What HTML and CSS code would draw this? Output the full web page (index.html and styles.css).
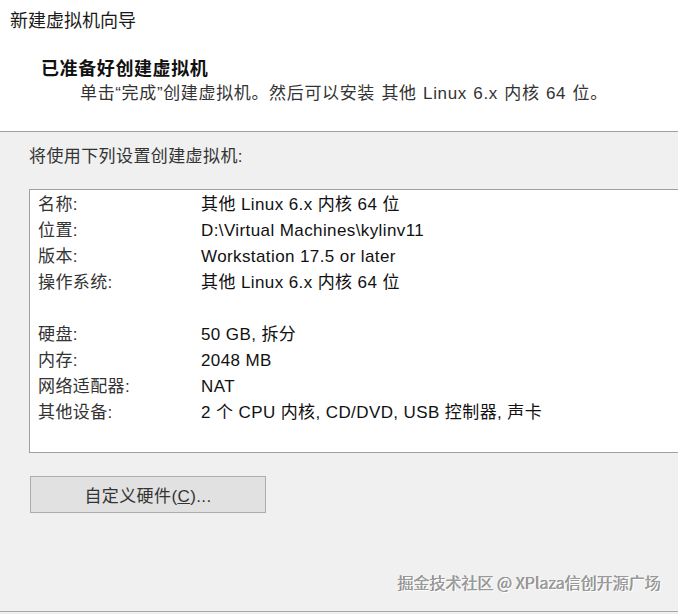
FILE: index.html
```html
<!DOCTYPE html>
<html lang="zh-CN">
<head>
<meta charset="utf-8">
<title>新建虚拟机向导</title>
<link rel="stylesheet" href="styles.css">
</head>
<body>
<div class="window">
  <header class="header">
    <div class="title">新建虚拟机向导</div>
    <div class="heading">已准备好创建虚拟机</div>
    <div class="subtitle">单击“完成”创建虚拟机。然后可以安装 其他 Linux 6.x 内核 64 位。</div>
  </header>
  <main class="content">
    <div class="intro">将使用下列设置创建虚拟机:</div>
    <div class="summary">
      <div class="row"><span class="label">名称:</span><span class="value">其他 Linux 6.x 内核 64 位</span></div>
      <div class="row"><span class="label">位置:</span><span class="value">D:\Virtual Machines\kylinv11</span></div>
      <div class="row"><span class="label">版本:</span><span class="value">Workstation 17.5 or later</span></div>
      <div class="row"><span class="label">操作系统:</span><span class="value">其他 Linux 6.x 内核 64 位</span></div>
      <div class="row spacer"></div>
      <div class="row"><span class="label">硬盘:</span><span class="value">50 GB, 拆分</span></div>
      <div class="row"><span class="label">内存:</span><span class="value">2048 MB</span></div>
      <div class="row"><span class="label">网络适配器:</span><span class="value">NAT</span></div>
      <div class="row"><span class="label">其他设备:</span><span class="value">2 个 CPU 内核, CD/DVD, USB 控制器, 声卡</span></div>
    </div>
    <button class="btn" type="button">自定义硬件(<u>C</u>)...</button>
    <div class="watermark">掘金技术社区 @ XPlaza信创开源广场</div>
  </main>
</div>
</body>
</html>
```
FILE: styles.css
```css
html, body {
  margin: 0;
  padding: 0;
}
body {
  width: 678px;
  height: 614px;
  overflow: hidden;
  background: #f0f0f0;
  font-family: "Liberation Sans", "Noto Sans CJK SC", sans-serif;
  font-size: 17px;
  letter-spacing: 0.4px;
  color: #222;
}
.window {
  display: flex;
  flex-direction: column;
  width: 678px;
  height: 611px;
  border-bottom: 1px solid #a8a8a8;
}
.header {
  height: 131px;
  background: #fff;
  border-bottom: 1px solid #a0a0a0;
}
.title {
  padding: 6px 0 0 10px;
  font-family: "Noto Sans CJK SC", sans-serif;
  font-size: 18px;
  letter-spacing: 0;
  line-height: 26px;
  color: #1a1a1a;
}
.heading {
  margin-top: 22px;
  padding-left: 41px;
  font-family: "Noto Sans CJK SC", sans-serif;
  font-weight: 700;
  font-size: 18px;
  letter-spacing: 0.6px;
  line-height: 26px;
  color: #111;
}
.subtitle {
  margin-top: 1px;
  padding-left: 80px;
  line-height: 26px;
  letter-spacing: 0.65px;
  word-spacing: 1px;
  color: #333;
}
.content {
  flex: 1;
  display: flex;
  flex-direction: column;
  padding-left: 29px;
}
.intro {
  padding-top: 12px;
  line-height: 26px;
  color: #333;
}
.summary {
  margin-top: 19px;
  padding: 2px 0 0 8px;
  box-sizing: border-box;
  height: 264px;
  background: #fff;
  border: 1px solid #a0a0a0;
  border-right: none;
}
.row {
  display: grid;
  grid-template-columns: 163px auto;
  height: 26px;
  line-height: 26px;
}
.label {
  color: #333;
}
.value {
  color: #111;
}
.btn {
  margin: 23px 0 0 1px;
  width: 236px;
  height: 37px;
  padding: 0;
  background: #e1e1e1;
  border: 1px solid #adadad;
  font-family: "Liberation Sans", "Noto Sans CJK SC", sans-serif;
  font-size: 17px;
  letter-spacing: 0.4px;
  color: #333;
}
.watermark {
  margin-top: auto;
  margin-bottom: 16px;
  align-self: flex-end;
  padding-right: 17px;
  font-family: "Noto Sans CJK SC", sans-serif;
  font-size: 16px;
  letter-spacing: 0;
  line-height: 26px;
  color: #9a9a9a;
  text-shadow: 1px 1px 0 #fff, -0.5px -0.5px 0 #777;
}
```
